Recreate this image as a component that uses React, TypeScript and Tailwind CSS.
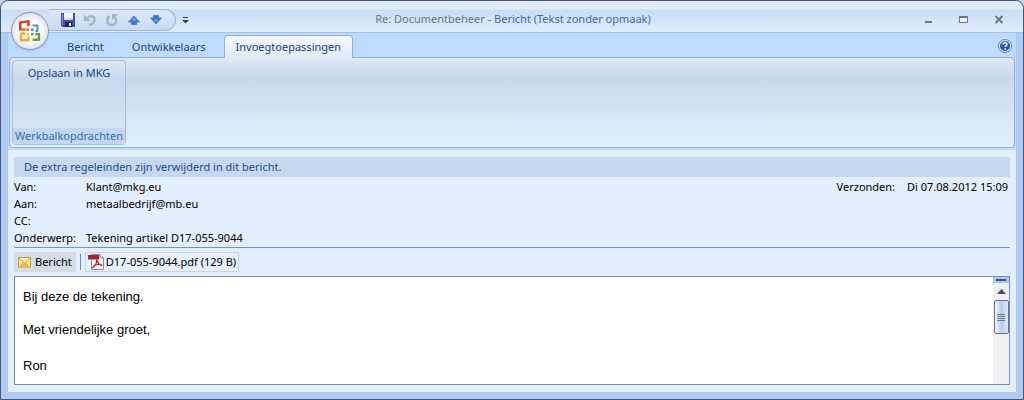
import type { ReactNode } from 'react';
import { useState } from 'react';
import { clsx } from 'clsx';

const TABS = ['Bericht', 'Ontwikkelaars', 'Invoegtoepassingen'];

const HEADERS = [
  { label: 'Van:', value: 'Klant@mkg.eu' },
  { label: 'Aan:', value: 'metaalbedrijf@mb.eu' },
  { label: 'CC:', value: '' },
  { label: 'Onderwerp:', value: 'Tekening artikel D17-055-9044' },
];

function OfficeLogo() {
  return (
    <svg viewBox="0 0 24 24" className="h-6 w-6" fill="none" strokeLinejoin="round">
      <path d="M7 10.500H2.200V3.500L10.500 2.300V7" stroke="#d4481c" strokeWidth="2.600" />
      <path d="M3.500 10.500H8" stroke="#ee8a2a" strokeWidth="2.400" />
      <path d="M14.500 6.500H19.500V12H17.500" stroke="#4b93dc" strokeWidth="2" />
      <path d="M7 14.500H3V21.300H10.500V17.500" stroke="#f3a91d" strokeWidth="2.400" />
      <path d="M14.500 20.800H21V15H17.500" stroke="#58a63a" strokeWidth="2.400" />
      <path d="M8.500 9.500H11V12H8.500z" fill="#e9702a" />
      <path d="M13 9.500h2.500V12H13z" fill="#3f83d0" />
      <path d="M8.500 14H11v2.500H8.500z" fill="#f5bd2e" />
      <path d="M13 14h2.500v2.500H13z" fill="#5cab40" />
    </svg>
  );
}

function SaveIcon() {
  return (
    <svg viewBox="0 0 14 14" className="h-3.5 w-3.5">
      <path d="M0 0h14v14H1.500L0 12.500z" fill="#4b48ad" />
      <path d="M1 1h1v11H1z" fill="#8f8edb" />
      <path d="M3 0h9v7H3z" fill="#f4f7ff" />
      <path d="M3 5h9v2H3z" fill="#cfd6f2" />
      <path d="M4 9h7v5H4z" fill="#23245f" />
      <path d="M8 10h2v3H8z" fill="#fff" />
    </svg>
  );
}

function UndoIcon() {
  return (
    <svg viewBox="0 0 14 14" className="h-3.5 w-3.5" fill="none" stroke="#a5b3c8" strokeWidth="2.400">
      <path d="M4 5.500C6.500 2 11.500 2.500 11.500 6.500C11.500 9.500 9 11.500 6 12" />
      <path d="M1 1.500V8h6.500z" fill="#a5b3c8" stroke="none" />
    </svg>
  );
}

function RedoIcon() {
  return (
    <svg viewBox="0 0 14 14" className="h-3.5 w-3.5" fill="none" stroke="#a5b3c8" strokeWidth="2.400">
      <path d="M4.500 3C1 6 1.500 12 6.500 12C11.500 12 12.500 7 9.500 4" />
      <path d="M7 1h6L7 7z" fill="#a5b3c8" stroke="none" />
    </svg>
  );
}

function ArrowIcon({ down = false }: { down?: boolean }) {
  return (
    <svg viewBox="0 0 14 14" className={clsx('h-3.5 w-3.5', down && 'rotate-180')}>
      <path d="M7 3L12.500 9H9.500V11.500H4.500V9H1.500z" fill="#3a76dc" stroke="#3462b8" strokeWidth=".6" />
      <path d="M7 4.500L9.500 7.500H4.500z" fill="#6ea6f2" />
    </svg>
  );
}

function MenuIcon() {
  return (
    <svg viewBox="0 0 7 7" className="h-[7px] w-[7px]" fill="#27406f">
      <path d="M1 0h5v1H1zM0 3h7L3.500 6.500z" />
    </svg>
  );
}

function HelpIcon() {
  return (
    <svg viewBox="0 0 14 14" className="h-3.5 w-3.5">
      <circle cx="7" cy="7" r="6.500" fill="#e8f1fd" stroke="#5b7fb5" />
      <circle cx="7" cy="7" r="5" fill="#2257c4" />
      <path d="M5 5.500C5 3.300 9 3.300 9 5.300C9 6.600 7.200 6.500 7.200 8" fill="none" stroke="#fff" strokeWidth="1.500" />
      <path d="M6.400 9.200h1.600v1.500H6.400z" fill="#fff" />
    </svg>
  );
}

function EnvelopeIcon() {
  return (
    <svg viewBox="0 0 13 12" className="h-3 w-[13px]">
      <path d="M.5 1.500h12v9.500H.5z" fill="#fbe28a" stroke="#c79a3a" />
      <path d="M1 10.500L5 6.500h3L12 10.500z" fill="#f0b93c" />
      <path d="M1 2L6.500 7L12 2" fill="#fff3c0" stroke="#cfa548" />
    </svg>
  );
}

function PdfIcon() {
  return (
    <svg viewBox="0 0 16 16" className="h-4 w-4">
      <path d="M3.500.5H12L15.500 4v11.500h-12z" fill="#fff" stroke="#8a8f99" />
      <path d="M12 .5V4h3.500" fill="#e3e5ea" stroke="#8a8f99" />
      <path d="M0 1h11v4.500H0z" fill="#a91f2a" />
      <path d="M4 14C7 12 9 8.500 8.800 5.500C9.500 9 11 11 14.500 11.500M5.500 11.800C8 10.200 11 10 14 11" fill="none" stroke="#c62a33" strokeWidth="1.400" />
    </svg>
  );
}

function IconButton({ label, children }: { label: string; children: ReactNode }) {
  return (
    <button type="button" aria-label={label} className="flex h-4 w-4 items-center justify-center">
      {children}
    </button>
  );
}

function TitleBar() {
  return (
    <header className="flex h-8 shrink-0 items-center rounded-t-lg border-b border-[#9fc3ee] bg-linear-to-b from-[#e3ecfa] from-25% via-[#cbddf5] via-30% to-[#e0edfc] pt-2 pr-4 pb-px">
      <div className="ml-12 flex h-[22px] shrink-0 items-center gap-1.5 rounded-r-full border border-l-0 border-[#9bb7de] bg-linear-to-b from-[#dce8f8] to-[#c9dcf5] px-[11px]">
        <IconButton label="Opslaan"><SaveIcon /></IconButton>
        <IconButton label="Ongedaan maken"><UndoIcon /></IconButton>
        <IconButton label="Opnieuw"><RedoIcon /></IconButton>
        <IconButton label="Vorig item"><ArrowIcon /></IconButton>
        <IconButton label="Volgend item"><ArrowIcon down /></IconButton>
      </div>
      <div className="ml-px"><IconButton label="Werkbalk aanpassen"><MenuIcon /></IconButton></div>
      <h1 className="min-w-0 flex-1 truncate pr-[88px] pb-0.5 text-center leading-4 text-[#3e6aaa]">
        <span className="text-[#6b7686]">Re: Documentbeheer - </span>Bericht (Tekst zonder opmaak)
      </h1>
      <div className="flex gap-[19px] text-[#6d7687]">
        <IconButton label="Minimaliseren">
          <svg viewBox="0 0 10 10" className="h-2.5 w-2.5"><path d="M1 6h7v2H1z" fill="currentColor" /></svg>
        </IconButton>
        <IconButton label="Maximaliseren">
          <svg viewBox="0 0 10 10" className="h-2.5 w-2.5">
            <path d="M.5 1.500h8v6h-8z" fill="#f3f7fd" stroke="currentColor" />
            <path d="M0 1h9v2H0z" fill="currentColor" />
          </svg>
        </IconButton>
        <IconButton label="Sluiten">
          <svg viewBox="0 0 10 10" className="h-2.5 w-2.5"><path d="M1.500 1l7 7M8.500 1l-7 7" stroke="currentColor" strokeWidth="2" /></svg>
        </IconButton>
      </div>
    </header>
  );
}

export default function App() {
  const [tab, setTab] = useState('Invoegtoepassingen');

  return (
    <div className="bg-[#bcd2ee]">
      <div className="relative flex min-h-screen flex-col rounded-t-lg border border-[#42557d] bg-[#b0cbf2] font-['Noto_Sans','Open_Sans',sans-serif] text-[11px] leading-4 text-black">
        <TitleBar />
        <button
          type="button"
          aria-label="Office-knop"
          className="absolute top-[11px] left-2.5 flex h-[38px] w-[38px] items-center justify-center rounded-full border border-[#8b98ad] bg-radial from-white from-40% to-[#c3cddd] shadow"
        >
          <OfficeLogo />
        </button>

        <div className="mx-[7px] bg-[#bfdbff] pb-0.5">
          <div className="flex h-6 items-end pr-1 pl-[45px]">
            <nav className="flex flex-1">
              {TABS.map(name => (
                <button
                  key={name}
                  type="button"
                  onClick={() => setTab(name)}
                  className={clsx(
                    'relative -mb-px h-[23px] rounded-t border border-b-0 text-[#15428b]',
                    name === 'Invoegtoepassingen' ? 'ml-1 px-[11px]' : 'px-[13px]',
                    tab === name ? 'border-[#8db2e3] bg-linear-to-b from-[#f4f9ff] to-[#e1eaf6]' : 'border-transparent'
                  )}
                >
                  {name}
                </button>
              ))}
            </nav>
            <button type="button" aria-label="Help" className="mb-1"><HelpIcon /></button>
          </div>

          <section className="mx-px rounded border border-[#8db2e3] bg-linear-to-b from-[#dfe8f4] via-[#c9d9ec] via-22% to-[#e0f1fd] p-0.5">
            <div className="flex h-[85px] w-fit flex-col rounded-sm border border-[#a5bdd9] bg-linear-to-b from-[#dfe9f4] via-[#c8d8ec] via-22% to-[#dbe8f5]">
              <button type="button" className="flex flex-1 items-start justify-center px-2 pt-1 text-[#15428b]">
                Opslaan in MKG
              </button>
              <p className="bg-[#c1d8f0] px-0.5 text-[#3e6aaa]">Werkbalkopdrachten</p>
            </div>
          </section>
        </div>

        <main className="mx-[7px] mb-[7px] flex flex-1 flex-col bg-[#e3eeff] px-1.5 py-[7px]">
          <p className="h-5 bg-[#c4d9f0] px-2.5 leading-5 text-[#1f4a87]">De extra regeleinden zijn verwijderd in dit bericht.</p>

          <div className="flex items-start justify-between border-b border-[#7195c9] py-px">
            <dl>
              {HEADERS.map(row => (
                <div key={row.label} className="flex h-[17px] items-center">
                  <dt className="w-[72px]">{row.label}</dt>
                  <dd>{row.value}</dd>
                </div>
              ))}
            </dl>
            <dl className="flex h-[17px] items-center gap-3 pr-0.5">
              <dt>Verzonden:</dt>
              <dd>Di 07.08.2012 15:09</dd>
            </dl>
          </div>

          <div className="my-1 flex h-5 items-center gap-1">
            <button type="button" className="flex h-5 items-center gap-1 bg-[#d3dde6] px-1"><EnvelopeIcon />Bericht</button>
            <span className="h-4 w-px bg-[#5f8cc7]" />
            <button type="button" className="flex h-5 items-center gap-0.5 border border-[#c5d4e8] bg-[#e6effc] px-0.5"><PdfIcon />D17-055-9044.pdf (129 B)</button>
          </div>

          <div className="flex flex-1 border border-[#6b90c6] bg-white">
            <article className="flex-1 px-2 pt-3 font-['Liberation_Sans',Arial,sans-serif] text-[13px]">
              <p>Bij deze de tekening.</p>
              <p className="mt-[17px]">Met vriendelijke groet,</p>
              <p className="mt-5">Ron</p>
            </article>
            <div className="flex w-4 flex-col items-center bg-[#f0f0f0]">
              <div className="flex h-1.5 w-full items-center justify-center bg-[#a9c8f2]"><span className="h-0.5 w-2.5 bg-[#3f5174]" /></div>
              <button type="button" aria-label="Omhoog" className="flex h-[17px] w-full items-center justify-center">
                <svg viewBox="0 0 9 5" className="h-[5px] w-[9px]"><path d="M4.500 0L9 5H0z" fill="#454b66" /></svg>
              </button>
              <div className="flex h-[34px] w-[15px] flex-col items-center justify-center gap-px rounded-xs border border-[#656f95] bg-linear-to-r from-[#f3f7fd] via-[#b9cdea] to-[#dfe9f8]">
                {[0, 1, 2, 3].map(line => <span key={line} className="h-px w-2 bg-[#6b7a90]" />)}
              </div>
            </div>
          </div>
        </main>
      </div>
    </div>
  );
}
